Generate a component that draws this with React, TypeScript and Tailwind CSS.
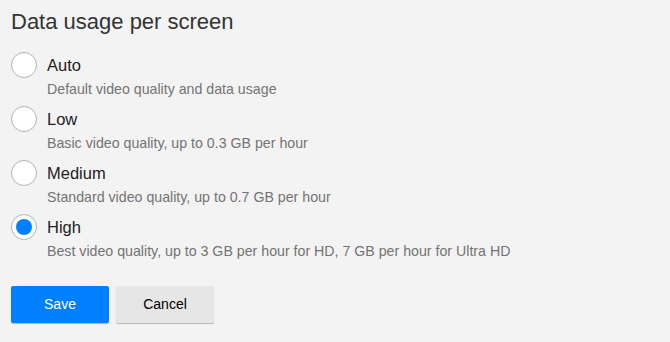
import { useState } from 'react';

const options = [
  { id: 'auto', label: 'Auto', desc: 'Default video quality and data usage' },
  { id: 'low', label: 'Low', desc: 'Basic video quality, up to 0.3 GB per hour' },
  { id: 'medium', label: 'Medium', desc: 'Standard video quality, up to 0.7 GB per hour' },
  { id: 'high', label: 'High', desc: 'Best video quality, up to 3 GB per hour for HD, 7 GB per hour for Ultra HD' },
];

export default function App() {
  const [selected, setSelected] = useState('high');

  return (
    <div
      className="w-[670px] h-[342px] bg-[#f3f3f3] px-[11px] pt-[8px] text-[#333]"
      style={{ fontFamily: '"Liberation Sans", Arial, sans-serif' }}
    >
      <h1 className="text-[22px] leading-[28px] text-[#333] font-normal mb-[16px]">Data usage per screen</h1>

      <div className="flex flex-col gap-[6px]">
        {options.map((o) => (
          <label key={o.id} className="flex items-start gap-[10px] cursor-pointer" onClick={() => setSelected(o.id)}>
            <span className="w-[26px] h-[26px] rounded-full bg-white border border-[#b3b3b3] flex items-center justify-center shrink-0">
              {selected === o.id && <span className="w-[16px] h-[16px] rounded-full bg-[#0080ff]" />}
            </span>
            <span className="flex flex-col">
              <span className="text-[16.5px] leading-[26px] text-[#222]">{o.label}</span>
              <span className="text-[14.2px] leading-[21px] pt-[1px] text-[#737373]">{o.desc}</span>
            </span>
          </label>
        ))}
      </div>

      <div className="flex gap-[7px] mt-[24px]">
        <button className="w-[98px] h-[37px] rounded-[2px] bg-[#0080ff] text-white text-[14px] shadow-[0_1px_1px_rgba(0,0,0,0.25)]">
          Save
        </button>
        <button className="w-[98px] h-[37px] rounded-[2px] bg-[#e6e6e6] text-black text-[14px] shadow-[0_1px_1px_rgba(0,0,0,0.25)]">
          Cancel
        </button>
      </div>
    </div>
  );
}
